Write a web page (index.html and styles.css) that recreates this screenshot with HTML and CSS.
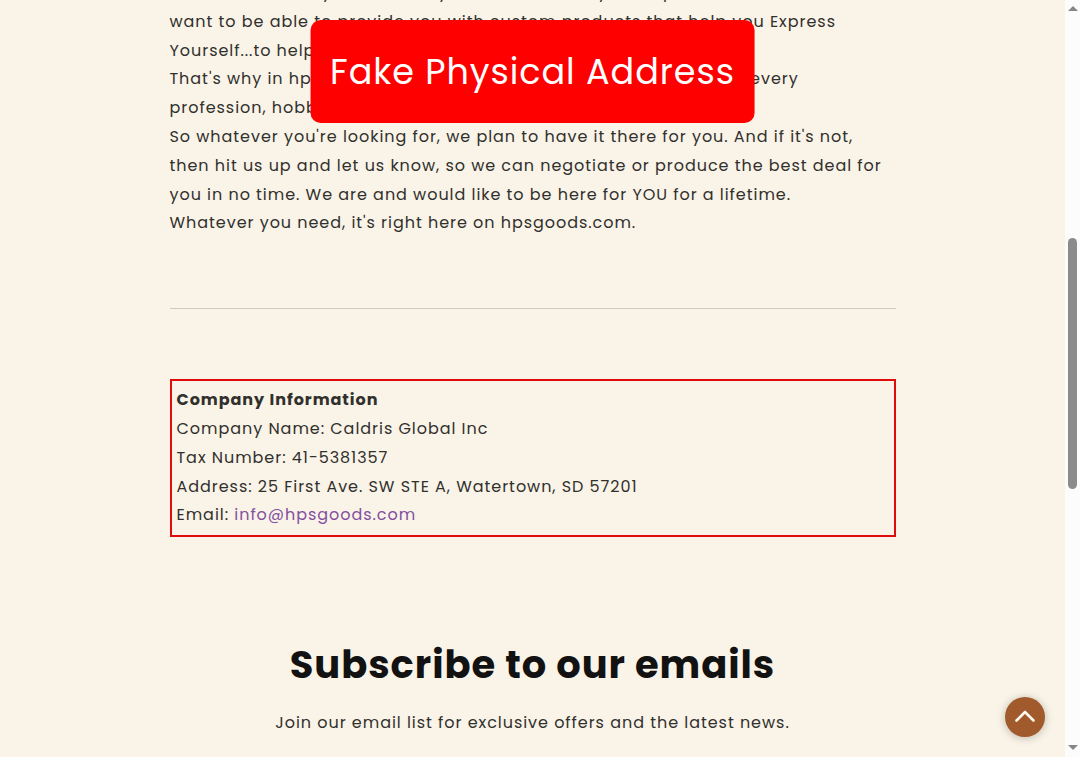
FILE: index.html
```html
<!DOCTYPE html>
<html lang="en">
<head>
<meta charset="utf-8">
<meta name="viewport" content="width=device-width, initial-scale=1">
<title>About us</title>
<link rel="stylesheet" href="styles.css">
</head>
<body>
<div class="window">
  <main class="page">
    <div class="banner" role="status">Fake Physical Address</div>
    <div class="content">
      <section class="story">
        We are here and you need it by and that is a way to help out. We<br>
        want to be able to provide you with custom products that help you Express<br>
        Yourself...to help you be you.<br>
        That's why in hpsgoods.com, you will find our products for nearly every<br>
        profession, hobby, and more.<br>
        So whatever you're looking for, we plan to have it there for you. And if it's not,<br>
        then hit us up and let us know, so we can negotiate or produce the best deal for<br>
        you in no time. We are and would like to be here for YOU for a lifetime.<br>
        Whatever you need, it's right here on hpsgoods.com.
      </section>
      <hr class="divider">
      <section class="company">
        <strong>Company Information</strong>
        <div>Company Name: Caldris Global Inc</div>
        <div>Tax Number: 41-5381357</div>
        <div>Address: 25 First Ave. SW STE A, Watertown, SD 57201</div>
        <div>Email: <a class="email" href="mailto:info@hpsgoods.com">info@hpsgoods.com</a></div>
      </section>
    </div>
    <section class="subscribe">
      <h2 class="subscribe-title">Subscribe to our emails</h2>
      <p class="subscribe-text">Join our email list for exclusive offers and the latest news.</p>
    </section>
    <button class="to-top" type="button" aria-label="Back to top">
      <svg width="20" height="12" viewBox="0 0 20 12" fill="none" stroke="#fff8ee" stroke-width="2.6" stroke-linecap="round" stroke-linejoin="round"><path d="M1.500 10.500 10 2l8.500 8.500"/></svg>
    </button>
  </main>
  <div class="scrollbar" aria-hidden="true">
    <svg class="arrow" width="10" height="5" viewBox="0 0 10 5"><path d="M0 5 5 0l5 5z" fill="#868686"/></svg>
    <div class="track"><div class="thumb"></div></div>
    <svg class="arrow" width="10" height="5" viewBox="0 0 10 5"><path d="M0 0h10L5 5z" fill="#868686"/></svg>
  </div>
</div>
</body>
</html>
```
FILE: styles.css
```css
* { box-sizing: border-box; }

body {
  margin: 0;
  background: #faf3e7;
  color: #30302d;
  font-family: Poppins, Inter, "Open Sans", sans-serif;
  font-size: 16px;
  line-height: 1.8;
  letter-spacing: 0.06rem;
}

.window {
  display: flex;
  height: 100vh;
  overflow: hidden;
}

.page {
  position: relative;
  flex: 1;
  min-width: 0;
  overflow: hidden;
}

.content {
  max-width: 726px;
  margin: 0 auto;
}

.story {
  margin-top: -21px;
  white-space: nowrap;
}

.divider {
  margin: 70px 0;
  border: 0;
  border-top: 1px solid #cfc9c0;
}

.company {
  padding: 5px;
  border: 2px solid #e00b0b;
}

.company strong { display: block; }

.email {
  color: #8250a0;
  text-decoration: none;
}

.subscribe {
  padding-top: 102px;
  text-align: center;
}

.subscribe-title {
  margin: 0;
  color: #121212;
  font-size: 2.4rem;
  font-weight: 700;
  line-height: 52px;
}

.subscribe-text {
  margin: 18px 0 0;
}

.banner {
  position: absolute;
  top: 20px;
  left: 50%;
  transform: translateX(-50%);
  padding: 20px;
  border-radius: 10px;
  background: #f00;
  color: #fff;
  font-size: 35px;
  white-space: nowrap;
}

.to-top {
  position: absolute;
  right: 20px;
  bottom: 20px;
  display: flex;
  align-items: center;
  justify-content: center;
  width: 40px;
  height: 40px;
  padding: 0 0 2px;
  border: 0;
  border-radius: 50%;
  background: #a05a2c;
  box-shadow: 0 1px 8px rgba(0, 0, 0, 0.25);
}

.scrollbar {
  display: flex;
  flex-direction: column;
  align-items: center;
  width: 15px;
  padding: 6px 0 7px;
  background: #fcfcfc;
}

.arrow { display: block; }

.track {
  flex: 1;
  width: 9px;
  padding-top: 227px;
}

.thumb {
  height: 251px;
  border-radius: 5px;
  background: #8b8b8b;
}
```
